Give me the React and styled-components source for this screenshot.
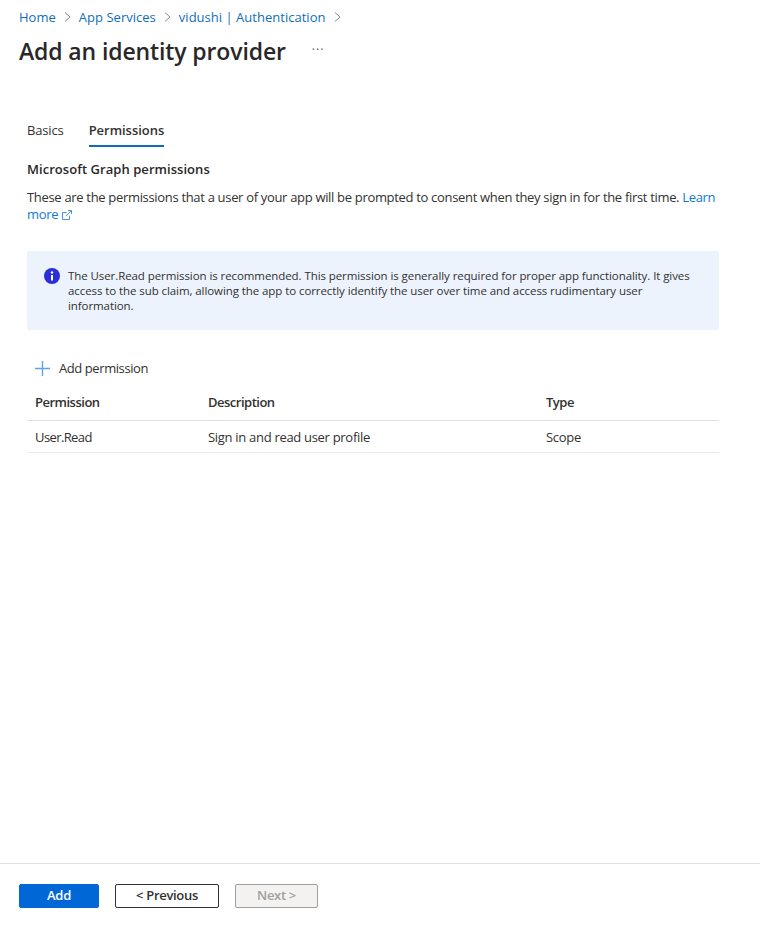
import React from "react";
import styled, { createGlobalStyle } from "styled-components";

const GlobalStyle = createGlobalStyle`
  html, body {
    margin: 0;
    padding: 0;
    background: #ffffff;
  }
  body {
    font-family: "Open Sans", "Noto Sans", "Liberation Sans", sans-serif;
    font-size: 13px;
    color: #323130;
  }
`;

const Page = styled.div`
  width: 760px;
  height: 928px;
  display: flex;
  flex-direction: column;
  overflow: hidden;
`;

const Header = styled.header`
  padding: 8px 19px 0;
`;

const Breadcrumbs = styled.nav`
  display: flex;
  align-items: center;
  height: 18px;
  font-size: 13px;
  letter-spacing: 0.02px;
`;

const Crumb = styled.a`
  color: #106ebe;
`;

const Chevron = styled.svg`
  width: 7px;
  height: 10px;
  margin: 0 8px;
  fill: none;
  stroke: #8a8886;
  stroke-width: 1;
`;

const TitleRow = styled.div`
  display: flex;
  align-items: center;
  margin-top: 7px;
  height: 36px;
`;

const Title = styled.h1`
  margin: 0;
  font-size: 23px;
  font-weight: 600;
  letter-spacing: -0.12px;
  color: #292827;
`;

const More = styled.span`
  margin-left: 26px;
  font-size: 12px;
  line-height: 12px;
  letter-spacing: 1px;
  color: #605e5c;
  position: relative;
  top: -1px;
`;

const Content = styled.main`
  flex: 1;
  padding: 43px 41px 0 27px;
`;

const Tabs = styled.div`
  display: flex;
  gap: 25px;
  height: 35px;
`;

const Tab = styled.div`
  height: 35px;
  box-sizing: border-box;
  padding-top: 9px;
  line-height: 18px;
  letter-spacing: ${(p) => (p.$active ? "-0.03px" : "-0.15px")};
  font-weight: ${(p) => (p.$active ? 600 : 400)};
  border-bottom: 2px solid ${(p) => (p.$active ? "#0f6cbd" : "transparent")};
`;

const SectionTitle = styled.h2`
  margin: 13px 0 0;
  font-size: 13px;
  line-height: 18px;
  font-weight: 600;
  letter-spacing: 0.05px;
  color: #292827;
`;

const Paragraph = styled.p`
  margin: 11px 0 0;
  line-height: 17px;
  letter-spacing: -0.32px;
`;

const Link = styled.a`
  color: #0f78d4;
`;

const ExternalIcon = styled.svg`
  width: 10px;
  height: 10px;
  margin-left: 4px;
  fill: none;
  stroke: #4a92de;
  stroke-width: 1;
  vertical-align: -1px;
`;

const InfoBar = styled.div`
  margin-top: 28px;
  height: 79px;
  box-sizing: border-box;
  padding: 17px 26px 0 17px;
  display: flex;
  gap: 8px;
  background: #ecf3fd;
  border-radius: 2px;
`;

const InfoIcon = styled.svg`
  flex: none;
  width: 16px;
  height: 16px;
`;

const InfoText = styled.div`
  font-size: 11.5px;
  line-height: 15px;
  letter-spacing: -0.08px;
`;

const AddPermission = styled.div`
  display: flex;
  align-items: center;
  gap: 9px;
  margin-top: 26px;
  height: 24px;
  padding-left: 8px;
  letter-spacing: -0.42px;
`;

const PlusIcon = styled.svg`
  width: 15px;
  height: 15px;
  stroke: #5ea3e6;
  stroke-width: 1.4;
`;

const Table = styled.div`
  margin-top: 5px;
`;

const Row = styled.div`
  display: grid;
  grid-template-columns: 173px 338px 1fr;
  align-items: center;
  height: ${(p) => p.$height}px;
  padding-left: 8px;
  padding-bottom: ${(p) => (p.$head ? 1 : 0)}px;
  border-bottom: 1px solid ${(p) => p.$line};
  font-weight: ${(p) => (p.$head ? 600 : 400)};
  letter-spacing: ${(p) => (p.$head ? "-0.5px" : "-0.3px")};
`;

const NameCell = styled.span`
  letter-spacing: -0.6px;
`;

const Footer = styled.footer`
  height: 65px;
  box-sizing: border-box;
  border-top: 1px solid #e1dfdd;
  padding: 20px 19px 0;
  display: flex;
  gap: 16px;
`;

const Button = styled.button`
  height: 24px;
  box-sizing: border-box;
  width: ${(p) => p.$width}px;
  padding: 0 0 2px;
  font-family: inherit;
  font-size: 13px;
  font-weight: 600;
  letter-spacing: -0.3px;
  border-radius: 2px;
  color: #323130;
  background: #ffffff;
  border: 1px solid #323130;
`;

const PrimaryButton = styled(Button)`
  color: #ffffff;
  background: #0067d6;
  border-color: #0067d6;
`;

const DisabledButton = styled(Button)`
  color: #a19f9d;
  background: #f3f2f1;
  border-color: #a19f9d;
`;

const ChevronRight = () => (
  <Chevron viewBox="0 0 7 10">
    <path d="M1 0.5 L6 5 L1 9.5" />
  </Chevron>
);

export default function App() {
  return (
    <Page>
      <GlobalStyle />
      <Header>
        <Breadcrumbs>
          <Crumb>Home</Crumb>
          <ChevronRight />
          <Crumb>App Services</Crumb>
          <ChevronRight />
          <Crumb>vidushi | Authentication</Crumb>
          <ChevronRight />
        </Breadcrumbs>
        <TitleRow>
          <Title>Add an identity provider</Title>
          <More>···</More>
        </TitleRow>
      </Header>
      <Content>
        <Tabs>
          <Tab>Basics</Tab>
          <Tab $active>Permissions</Tab>
        </Tabs>
        <SectionTitle>Microsoft Graph permissions</SectionTitle>
        <Paragraph>
          These are the permissions that a user of your app will be prompted to consent when they
          sign in for the first time. <Link>Learn more</Link>
          <ExternalIcon viewBox="0 0 10 10">
            <path d="M7.5 5.5 V9.5 H0.5 V2.5 H4.5" />
            <path d="M6 0.5 H9.5 V4 M9.5 0.5 L4 6" />
          </ExternalIcon>
        </Paragraph>
        <InfoBar>
          <InfoIcon viewBox="0 0 16 16">
            <circle cx="8" cy="8" r="8" fill="#2b2fd9" />
            <rect x="7" y="7" width="2" height="5.5" fill="#ffffff" />
            <circle cx="8" cy="4.5" r="1.2" fill="#ffffff" />
          </InfoIcon>
          <InfoText>
            The User.Read permission is recommended. This permission is generally required for
            proper app functionality. It gives access to the sub claim, allowing the app to
            correctly identify the user over time and access rudimentary user information.
          </InfoText>
        </InfoBar>
        <AddPermission>
          <PlusIcon viewBox="0 0 15 15">
            <path d="M7.5 0 V15 M0 7.5 H15" />
          </PlusIcon>
          Add permission
        </AddPermission>
        <Table>
          <Row $head $height={34} $line="#e1dfdd">
            <span>Permission</span>
            <span>Description</span>
            <span>Type</span>
          </Row>
          <Row $height={31} $line="#edebe9">
            <NameCell>User.Read</NameCell>
            <span>Sign in and read user profile</span>
            <span>Scope</span>
          </Row>
        </Table>
      </Content>
      <Footer>
        <PrimaryButton $width={80}>Add</PrimaryButton>
        <Button $width={104}>&lt; Previous</Button>
        <DisabledButton $width={83}>Next &gt;</DisabledButton>
      </Footer>
    </Page>
  );
}
